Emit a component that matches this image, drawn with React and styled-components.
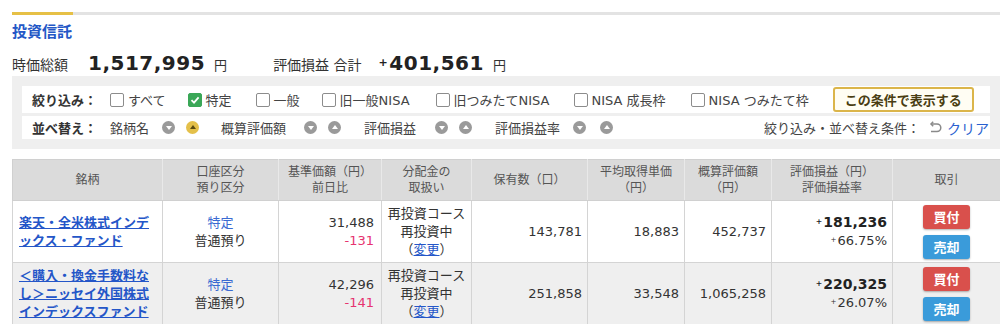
import React from 'react';
import styled, { createGlobalStyle } from 'styled-components';

const FONT = `"DejaVu Sans", "Noto Sans CJK JP", sans-serif`;

const Global = createGlobalStyle`
  html, body { margin: 0; padding: 0; background: #fff; }
  body { font-family: ${FONT}; color: #333; overflow: hidden; }
`;

const Page = styled.div`
  width: 1000px;
  box-sizing: border-box;
  padding: 12px 0 0 12px;
`;

const TopBar = styled.div`
  display: flex;
  height: 3px;
  background: #e3e3e3;
`;

const TopBarActive = styled.div`
  width: 61px;
  background: #e6c046;
`;

const Title = styled.h2`
  margin: 7px 0 0;
  font-size: 15px;
  line-height: 20px;
  font-weight: bold;
  color: #2357c6;
`;

const Summary = styled.div`
  display: flex;
  align-items: baseline;
  height: 25px;
  margin-top: 9px;
`;

const SumLabel = styled.span`
  font-size: 14px;
  color: #333;
  margin-left: ${p => p.$gap || 0}px;
`;

const BigNum = styled.span`
  font-size: 20px;
  font-weight: bold;
  letter-spacing: 0.5px;
  color: #222;
  margin-left: ${p => p.$gap || 0}px;
`;

const Yen = styled.span`
  font-size: 13px;
  color: #333;
  margin-left: 9px;
`;

const Sign = styled.span`
  font-size: 0.55em;
  vertical-align: 0.35em;
  margin-right: 1px;
  font-weight: bold;
`;

const Panel = styled.div`
  background: #efefef;
  padding: 10px 10px 10px 10px;
  display: flex;
  flex-direction: column;
  gap: 3px;
`;

const PanelRow = styled.div`
  display: flex;
  align-items: center;
  height: ${p => p.$h}px;
  background: #fff;
  padding: 0 1px 0 10px;
  font-size: 13px;
  color: #444;
`;

const RowLabel = styled.span`
  width: 78px;
  flex: none;
  font-weight: bold;
  color: #333;
`;

const CheckItem = styled.label`
  display: inline-flex;
  align-items: center;
  gap: 4px;
  margin-right: ${p => p.$mr}px;
  white-space: nowrap;
`;

const Box = styled.span`
  width: 14px;
  height: 14px;
  box-sizing: border-box;
  border: 1px solid ${p => (p.$on ? '#3aa757' : '#8c8c8c')};
  border-radius: 2px;
  background: ${p => (p.$on ? '#3aa757' : '#fff')};
  display: inline-flex;
  align-items: center;
  justify-content: center;
`;

const ApplyButton = styled.button`
  margin-left: 2px;
  width: 141px;
  height: 25px;
  box-sizing: border-box;
  border: 2px solid #dbb54a;
  border-radius: 3px;
  background: #fffdf3;
  color: #4a3d12;
  font-family: ${FONT};
  font-size: 13px;
  font-weight: bold;
  padding: 0;
  cursor: pointer;
`;

const SortName = styled.span`
  white-space: nowrap;
  margin-left: ${p => p.$gap || 0}px;
`;

const SortBtn = styled.span`
  width: 13px;
  height: 13px;
  border-radius: 50%;
  background: ${p => (p.$active ? '#e4c04a' : '#9a9a9a')};
  display: inline-flex;
  align-items: center;
  justify-content: center;
  margin-left: ${p => p.$gap}px;
  flex: none;
`;

const Tri = styled.span`
  width: 0;
  height: 0;
  border-left: 3px solid transparent;
  border-right: 3px solid transparent;
  ${p =>
    p.$up
      ? `border-bottom: 4px solid ${p.$dark ? '#5a4a10' : '#fff'}; margin-top: -1px;`
      : `border-top: 4px solid #fff; margin-top: 1px;`}
`;

const ClearArea = styled.div`
  margin-left: auto;
  display: flex;
  align-items: center;
  white-space: nowrap;
`;

const Spacer = styled.span`
  width: 8px;
`;

const ClearLink = styled.a`
  color: #2a5fcf;
  text-decoration: none;
  margin-left: 4px;
  font-size: 14px;
`;

const Table = styled.table`
  margin-top: 10px;
  width: 988px;
  table-layout: fixed;
  border-collapse: collapse;
  font-size: 13px;
  color: #333;
`;

const HeadRow = styled.tr`
  height: 41px;
  background: #dbdbdb;
`;

const Th = styled.th`
  font-weight: normal;
  font-size: 12px;
  line-height: 16px;
  color: #555;
  border: 1px solid #d0d0d0;
  border-left-color: #e9e9e9;
  border-right-color: #e9e9e9;
  text-align: center;
  padding: 0 2px;
  &:first-child { border-left-color: #d0d0d0; }
`;

const BodyRow = styled.tr`
  height: ${p => p.$h}px;
  background: ${p => (p.$alt ? '#efefef' : '#fff')};
`;

const Td = styled.td`
  border: 1px solid #d4d4d4;
  padding: 0 ${p => p.$pr ?? 6}px 0 ${p => p.$pl ?? 6}px;
  text-align: ${p => p.$align || 'left'};
  vertical-align: middle;
  line-height: 18px;
`;

const FundLink = styled.a`
  color: #2456c8;
  font-weight: bold;
  text-decoration: underline;
  line-height: 18px;
`;

const BlueText = styled.div`
  color: #3a6ad2;
`;

const Down = styled.div`
  color: #e6336f;
`;

const SmallLink = styled.a`
  color: #2456c8;
  text-decoration: underline;
`;

const Gain = styled.div`
  font-weight: bold;
  font-size: 14px;
  color: #222;
`;

const Rate = styled.div`
  & > span { font-weight: normal; }
`;

const Stack = styled.div`
  display: flex;
  flex-direction: column;
  align-items: center;
  gap: 6px;
`;

const TradeBtn = styled.button`
  width: 47px;
  height: 24px;
  border: none;
  border-radius: 3px;
  background: ${p => (p.$sell ? '#3a9bda' : '#d9504c')};
  color: #fff;
  font-family: ${FONT};
  font-weight: bold;
  font-size: 13px;
  padding: 0;
  box-shadow: 0 1px 2px rgba(0, 0, 0, 0.3);
  cursor: pointer;
`;

const Check = () => (
  <svg width="10" height="10" viewBox="0 0 10 10">
    <path d="M1.5 5.2 L4 7.6 L8.6 2.4" fill="none" stroke="#fff" strokeWidth="1.8" />
  </svg>
);

const UndoIcon = () => (
  <svg width="15" height="13" viewBox="0 0 15 13">
    <path d="M3 3 H9 A3.8 3.8 0 0 1 9 10.6 H3" fill="none" stroke="#8a8a8a" strokeWidth="1.5" />
    <path d="M5.2 0.8 L3 3 L5.2 5.2" fill="none" stroke="#8a8a8a" strokeWidth="1.5" />
  </svg>
);

const filters = [
  { label: 'すべて', mr: 22 },
  { label: '特定', on: true, mr: 24 },
  { label: '一般', mr: 22 },
  { label: '旧一般NISA', mr: 26 },
  { label: '旧つみたてNISA', mr: 24 },
  { label: 'NISA 成長枠', mr: 25 },
  { label: 'NISA つみたて枠', mr: 22 },
];

const sorts = [
  { label: '銘柄名', gap: 0, g1: 13, active: true },
  { label: '概算評価額', gap: 22, g1: 18 },
  { label: '評価損益', gap: 23, g1: 19 },
  { label: '評価損益率', gap: 23, g1: 13, g2: 14 },
];

const widths = [150, 116, 103, 90, 116, 97, 87, 121, 108];

const funds = [
  {
    name: ['楽天・全米株式インデ', 'ックス・ファンド'],
    price: '31,488',
    diff: '-131',
    qty: '143,781',
    avg: '18,883',
    value: '452,737',
    gain: '181,236',
    rate: '66.75%',
  },
  {
    name: ['＜購入・換金手数料な', 'し＞ニッセイ外国株式', 'インデックスファンド'],
    price: '42,296',
    diff: '-141',
    qty: '251,858',
    avg: '33,548',
    value: '1,065,258',
    gain: '220,325',
    rate: '26.07%',
    alt: true,
  },
];

export default function App() {
  return (
    <>
      <Global />
      <Page>
        <TopBar>
          <TopBarActive />
        </TopBar>
        <Title>投資信託</Title>
        <Summary>
          <SumLabel>時価総額</SumLabel>
          <BigNum $gap={20}>1,517,995</BigNum>
          <Yen>円</Yen>
          <SumLabel $gap={46}>評価損益 合計</SumLabel>
          <BigNum $gap={17}>
            <Sign>+</Sign>401,561
          </BigNum>
          <Yen>円</Yen>
        </Summary>
        <Panel>
          <PanelRow $h={27}>
            <RowLabel>絞り込み：</RowLabel>
            {filters.map(f => (
              <CheckItem key={f.label} $mr={f.mr}>
                <Box $on={f.on}>{f.on && <Check />}</Box>
                {f.label}
              </CheckItem>
            ))}
            <ApplyButton>この条件で表示する</ApplyButton>
          </PanelRow>
          <PanelRow $h={23}>
            <RowLabel>並べ替え：</RowLabel>
            {sorts.map(s => (
              <React.Fragment key={s.label}>
                <SortName $gap={s.gap}>{s.label}</SortName>
                <SortBtn $gap={s.g1}>
                  <Tri />
                </SortBtn>
                <SortBtn $gap={s.g2 || 11} $active={s.active}>
                  <Tri $up $dark={s.active} />
                </SortBtn>
              </React.Fragment>
            ))}
            <ClearArea>
              絞り込み・並べ替え条件：
              <Spacer />
              <UndoIcon />
              <ClearLink href="#">クリア</ClearLink>
            </ClearArea>
          </PanelRow>
        </Panel>
        <Table>
          <colgroup>
            {widths.map((w, i) => (
              <col key={i} style={{ width: w }} />
            ))}
          </colgroup>
          <thead>
            <HeadRow>
              <Th>銘柄</Th>
              <Th>口座区分<br />預り区分</Th>
              <Th>基準価額（円）<br />前日比</Th>
              <Th>分配金の<br />取扱い</Th>
              <Th>保有数（口）</Th>
              <Th>平均取得単価<br />（円）</Th>
              <Th>概算評価額<br />（円）</Th>
              <Th>評価損益（円）<br />評価損益率</Th>
              <Th>取引</Th>
            </HeadRow>
          </thead>
          <tbody>
            {funds.map((f, i) => (
              <BodyRow key={i} $h={62} $alt={f.alt}>
                <Td>
                  <FundLink href="#">
                    {f.name.map((n, j) => (
                      <React.Fragment key={j}>
                        {n}
                        {j < f.name.length - 1 && <br />}
                      </React.Fragment>
                    ))}
                  </FundLink>
                </Td>
                <Td $align="center">
                  <BlueText>特定</BlueText>
                  <div>普通預り</div>
                </Td>
                <Td $align="right" $pr={7}>
                  <div>{f.price}</div>
                  <Down>{f.diff}</Down>
                </Td>
                <Td $align="center" $pl={2} $pr={2}>
                  <div>再投資コース</div>
                  <div>再投資中</div>
                  <div>
                    （<SmallLink href="#">変更</SmallLink>）
                  </div>
                </Td>
                <Td $align="right" $pr={5}>{f.qty}</Td>
                <Td $align="right" $pr={5}>{f.avg}</Td>
                <Td $align="right" $pr={5}>{f.value}</Td>
                <Td $align="right" $pr={5}>
                  <Gain>
                    <Sign>+</Sign>
                    {f.gain}
                  </Gain>
                  <Rate>
                    <Sign>+</Sign>
                    {f.rate}
                  </Rate>
                </Td>
                <Td $align="center" $pl={0} $pr={0}>
                  <Stack>
                    <TradeBtn>買付</TradeBtn>
                    <TradeBtn $sell>売却</TradeBtn>
                  </Stack>
                </Td>
              </BodyRow>
            ))}
          </tbody>
        </Table>
      </Page>
    </>
  );
}
